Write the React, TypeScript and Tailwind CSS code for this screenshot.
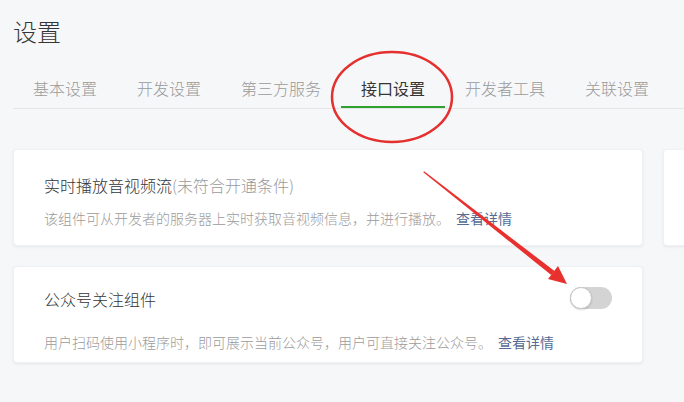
import React from "react";

const font = { fontFamily: '"Noto Sans CJK SC", "Noto Sans", sans-serif' };

const tabs = ["基本设置", "开发设置", "第三方服务", "接口设置", "开发者工具", "关联设置"];

export default function App() {
  return (
    <div
      className="relative w-[684px] h-[402px] overflow-hidden bg-[#f6f7f9] pl-[13px] font-light"
      style={font}
    >
      <h1 className="pt-[16px] text-[24px] leading-[30px] text-[#353535] font-light">设置</h1>

      <div className="mt-[22px] flex border-b border-[#e5e5e5]">
        {tabs.map((t) =>
          t === "接口设置" ? (
            <div
              key={t}
              className="px-[20px] h-[40px] leading-[40px] text-[16px] text-[#353535] font-normal border-b-2 border-[#2ea12f] -mb-px"
            >
              {t}
            </div>
          ) : (
            <div key={t} className="px-[20px] h-[40px] leading-[40px] text-[16px] text-[#9a9a9a]">
              {t}
            </div>
          )
        )}
      </div>

      <div className="mt-[40px] flex gap-[20px]">
        <div className="w-[630px] h-[97px] shrink-0 rounded-[4px] bg-white px-[30px] pt-[23px] shadow-[0_1px_3px_rgba(0,0,0,0.07)] border border-[#f0f1f4]">
          <div className="text-[16px] leading-[24px] text-[#353535]">
            实时播放音视频流<span className="text-[#9a9a9a]">(未符合开通条件)</span>
          </div>
          <div className="mt-[10px] text-[14px] leading-[22px] text-[#9b9b9b] whitespace-nowrap">
            该组件可从开发者的服务器上实时获取音视频信息，并进行播放。
            <span className="ml-[6px] text-[#576b95] font-normal">查看详情</span>
          </div>
        </div>
        <div className="w-[630px] h-[97px] shrink-0 rounded-[4px] bg-white shadow-[0_1px_3px_rgba(0,0,0,0.07)] border border-[#f0f1f4]" />
      </div>

      <div className="mt-[20px] w-[630px] h-[97px] rounded-[4px] bg-white px-[30px] pt-[20px] shadow-[0_1px_3px_rgba(0,0,0,0.07)] border border-[#f0f1f4]">
        <div className="flex items-center justify-between">
          <div className="text-[16px] leading-[24px] text-[#353535]">公众号关注组件</div>
          <div className="relative w-[42px] h-[22px] rounded-full bg-[#d4d4d4] -mt-[3px]">
            <div className="absolute left-0 top-0 w-[22px] h-[22px] rounded-full bg-white border border-[#c8c8c8] shadow-[0_1px_2px_rgba(0,0,0,0.15)]" />
          </div>
        </div>
        <div className="mt-[20px] text-[14px] leading-[22px] text-[#9b9b9b] whitespace-nowrap">
          用户扫码使用小程序时，即可展示当前公众号，用户可直接关注公众号。
          <span className="ml-[6px] text-[#576b95] font-normal">查看详情</span>
        </div>
      </div>

      <svg
        className="absolute left-0 top-0 pointer-events-none"
        width="684"
        height="402"
        viewBox="0 0 684 402"
      >
        <ellipse cx="392" cy="97" rx="60" ry="45" fill="none" stroke="#e4312f" strokeWidth="2.5" />
        <polygon
          points="423,172 424.5,171.5 554.5,271 551.2,275"
          fill="#e8302e"
        />
        <polygon points="567,284 548,279 558,266" fill="#e8302e" />
      </svg>
    </div>
  );
}
